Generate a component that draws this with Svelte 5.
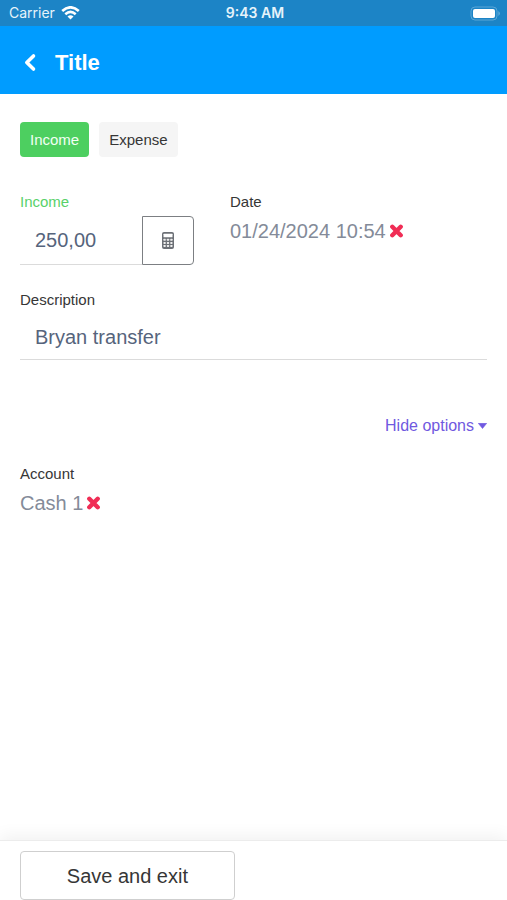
<script>
    let kind = "income";
    let amount = "250,00";
    let date = "01/24/2024 10:54";
    let description = "Bryan transfer";
    let account = "Cash 1";
    let showOptions = true;
</script>

<style>
    :global(body) {
        margin: 0;
        background: #fff;
    }

    .screen {
        display: flex;
        flex-direction: column;
        min-height: 100vh;
        font-family: "Liberation Sans", Arial, sans-serif;
        font-size: 15px;
        line-height: 20px;
        color: #363636;
    }

    button,
    input {
        box-sizing: border-box;
        margin: 0;
        padding: 0;
        border: 0;
        background: none;
        font: inherit;
        color: inherit;
    }

    button {
        cursor: pointer;
    }

    svg {
        display: block;
    }

    .status {
        display: grid;
        grid-template-columns: 1fr auto 1fr;
        align-items: center;
        height: 26px;
        padding: 0 6px 0 9px;
        background: #1c84c6;
        color: #e6f3fa;
        font-family: Inter, sans-serif;
        font-size: 14px;
    }

    .carrier {
        display: flex;
        align-items: center;
        gap: 6px;
    }

    .time {
        font-weight: 600;
    }

    .battery {
        justify-self: end;
    }

    .navbar {
        display: flex;
        align-items: center;
        gap: 16px;
        height: 68px;
        padding: 6px 22px 0;
        box-sizing: border-box;
        background: #009cff;
        color: #fff;
    }

    h1 {
        margin: 0;
        font-size: 22px;
        line-height: 28px;
    }

    main {
        flex: 1;
        padding: 28px 20px;
    }

    .kinds {
        display: flex;
        gap: 10px;
        margin-bottom: 35px;
    }

    .kinds button {
        height: 35px;
        padding: 0 10px;
        border-radius: 4px;
        background: #f5f5f5;
    }

    .kinds button.active {
        background: #4dcf60;
        color: #f2fff4;
    }

    .row {
        display: grid;
        grid-template-columns: 174px 1fr;
        gap: 36px;
        margin-bottom: 25px;
    }

    .label {
        display: block;
    }

    .label.green {
        color: #58d169;
    }

    .addons {
        display: flex;
        margin-top: 4px;
    }

    .text {
        width: 100%;
        min-width: 0;
        height: 49px;
        padding: 0 15px;
        border-bottom: 1px solid #dbdbdb;
        border-radius: 0;
        outline: 0;
        font-size: 20px;
        color: #56647c;
    }

    .description {
        height: 45px;
        margin-top: 5px;
    }

    .calc {
        display: flex;
        flex: none;
        align-items: center;
        justify-content: center;
        width: 52px;
        height: 49px;
        border: 1px solid #7c7f83;
        border-radius: 0 4px 4px 0;
    }

    .value {
        display: flex;
        align-items: center;
        gap: 3px;
        margin-top: 6px;
        font-size: 20px;
        line-height: 26px;
        color: #848b99;
    }

    .options {
        display: flex;
        justify-content: flex-end;
        margin: 56px 0 28px;
    }

    .options button {
        display: flex;
        align-items: center;
        gap: 4px;
        font-size: 16px;
        color: #7059e0;
    }

    footer {
        padding: 10px 20px 0;
        border-top: 1px solid #ececec;
        box-shadow: 0 -4px 16px rgba(0, 0, 0, 0.06);
    }

    .save {
        width: 46%;
        height: 49px;
        border: 1px solid #cfcfcf;
        border-radius: 4px;
        font-size: 20px;
    }
</style>

{#snippet cross()}
    <svg width="15" height="14" viewBox="0 0 15 14">
        <path d="M3.300 2.800 L11.700 11.200 M11.700 2.800 L3.300 11.200" stroke="#f02d55" stroke-width="4.400" stroke-linecap="round" />
    </svg>
{/snippet}

<div class="screen">
    <div class="status">
        <div class="carrier">
            <span>Carrier</span>
            <svg width="19" height="14" viewBox="0 0 19 14" fill="none" stroke="#fff" stroke-width="2.6">
                <path d="M1.200 5 Q9.500 -2.400 17.800 5" />
                <path d="M4.300 8.200 Q9.500 3.600 14.700 8.200" />
                <path d="M6.500 10.500 Q9.500 8.100 12.500 10.500 L9.500 13.600 Z" fill="#fff" stroke="none" />
            </svg>
        </div>
        <span class="time">9:43 AM</span>
        <svg class="battery" width="31" height="15" viewBox="0 0 31 15">
            <rect x="1" y="1" width="26" height="13" rx="4" fill="none" stroke="#5aa6d6" />
            <rect x="3" y="3" width="22" height="9" rx="2" fill="#fff" />
            <path d="M28.500 5 Q31 7.500 28.500 10 Z" fill="#74b5dd" />
        </svg>
    </div>

    <header class="navbar">
        <button aria-label="Back">
            <svg width="17" height="20" viewBox="0 0 17 20">
                <path d="M11.500 3 L4.800 9.500 L11.500 16" fill="none" stroke="#fff" stroke-width="3.600" stroke-linecap="round" stroke-linejoin="round" />
            </svg>
        </button>
        <h1>Title</h1>
    </header>

    <main>
        <div class="kinds">
            <button class:active={kind === "income"} on:click={() => (kind = "income")}>Income</button>
            <button class:active={kind === "expense"} on:click={() => (kind = "expense")}>Expense</button>
        </div>

        <div class="row">
            <div>
                <label for="amount" class="label green">Income</label>
                <div class="addons">
                    <input id="amount" class="text" type="text" inputmode="decimal" bind:value={amount} />
                    <button class="calc" aria-label="Calculator">
                        <svg width="12" height="17" viewBox="0 0 12 17">
                            <rect width="12" height="17" rx="2" fill="#6c7076" />
                            <rect x="1.500" y="1.700" width="9" height="3.600" rx="0.500" fill="#fff" />
                            {#each [6.8, 9.9, 13] as y}
                                {#each [1.5, 4.9, 8.3] as x}
                                    <rect {x} {y} width="2.200" height="2" rx="0.400" fill="#eee" />
                                {/each}
                            {/each}
                        </svg>
                    </button>
                </div>
            </div>
            <div>
                <span class="label">Date</span>
                <div class="value">
                    <span>{date}</span>
                    <button aria-label="Clear date" on:click={() => (date = "")}>{@render cross()}</button>
                </div>
            </div>
        </div>

        <label for="description" class="label">Description</label>
        <input id="description" class="text description" type="text" bind:value={description} />

        <div class="options">
            <button on:click={() => (showOptions = !showOptions)}>
                {showOptions ? "Hide options" : "Show options"}
                <svg width="9" height="6" viewBox="0 0 9 6">
                    <path d="M0.300 0.300 H8.700 L4.500 5.500 Z" fill="#7059e0" stroke="#7059e0" stroke-width="0.600" stroke-linejoin="round" />
                </svg>
            </button>
        </div>

        {#if showOptions}
            <span class="label">Account</span>
            <div class="value">
                <span>{account}</span>
                <button aria-label="Clear account" on:click={() => (account = "")}>{@render cross()}</button>
            </div>
        {/if}
    </main>

    <footer>
        <button class="save">Save and exit</button>
    </footer>
</div>
